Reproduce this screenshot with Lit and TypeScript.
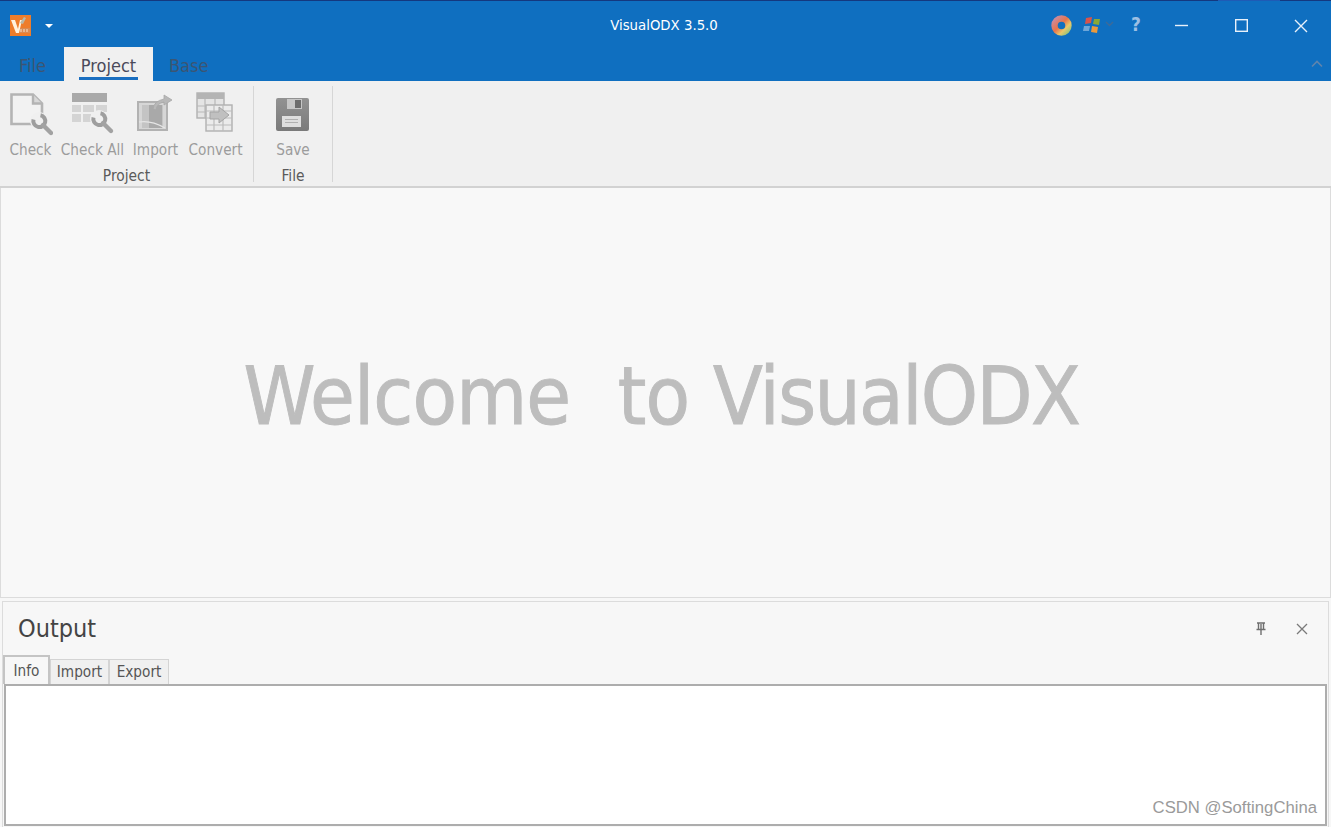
import { LitElement, html, css, svg } from "lit";
import { customElement } from "lit/decorators.js";

const checkIcon = svg`<svg width="44" height="44" viewBox="0 0 44 44">
  <path d="M2.5 2.5H24L33 11.5V32H2.5Z" fill="#f2f2f2" stroke="#b4b4b4" stroke-width="2.6"/>
  <path d="M24 2.5V11.5H33" fill="#d8d8d8" stroke="#b4b4b4" stroke-width="2.4"/>
  <circle cx="30" cy="29" r="9" fill="#f0f0f0"/>
  <path d="M24.5 27.5A6 6 0 1 0 31.5 23.2" fill="none" stroke="#9e9e9e" stroke-width="4"/>
  <path d="M34 33L42 41" stroke="#a2a2a2" stroke-width="4.4" stroke-linecap="round"/>
</svg>`;
const checkAllIcon = svg`<svg width="44" height="44" viewBox="0 0 44 44">
  <rect x="1" y="1" width="35" height="9" fill="#a9a9a9"/>
  <g fill="#d4d4d4">
    <rect x="1" y="13" width="9" height="7"/><rect x="12" y="13" width="11" height="7"/><rect x="25" y="13" width="11" height="7"/>
    <rect x="1" y="22" width="9" height="8"/><rect x="12" y="22" width="8" height="8"/>
  </g>
  <circle cx="28" cy="27" r="9" fill="#f0f0f0"/>
  <path d="M22.5 25.5A6 6 0 1 0 29.5 21.2" fill="none" stroke="#9e9e9e" stroke-width="4"/>
  <path d="M32 31L40 39" stroke="#a2a2a2" stroke-width="4.4" stroke-linecap="round"/>
</svg>`;
const importIcon = svg`<svg width="44" height="44" viewBox="0 0 44 44">
  <rect x="4" y="10" width="29" height="28" fill="#d6d6d6" stroke="#b2b2b2" stroke-width="2"/>
  <rect x="8" y="13" width="21" height="23" fill="#c4c4c4"/>
  <rect x="15" y="13" width="13" height="23" fill="#a9a9a9"/>
  <path d="M5 30Q17 28 31 36" fill="none" stroke="#e6e6e6" stroke-width="1.2"/>
  <path d="M19 17Q20 9 30 7V3L38 8L30 13V10Q23 11 22 18Z" fill="#b8b8b8" stroke="#a8a8a8" stroke-width=".8"/>
</svg>`;
const convertIcon = svg`<svg width="44" height="44" viewBox="0 0 44 44">
  <rect x="3" y="1" width="27" height="25" fill="#e4e4e4" stroke="#b0b0b0" stroke-width="1.4"/>
  <rect x="3" y="1" width="27" height="6" fill="#b4b4b4"/>
  <path d="M3 14H30M3 20H30M11 7V26M21 7V26" stroke="#b8b8b8" stroke-width="1.2"/>
  <rect x="12" y="13" width="26" height="26" fill="#ebebeb" stroke="#b0b0b0" stroke-width="1.4"/>
  <path d="M12 19H38M12 26H38M12 33H38M20 13V39M29 13V39" stroke="#bcbcbc" stroke-width="1.2"/>
  <path d="M16 20H25V15L35 23L25 31V27H16Z" fill="#c0c0c0" stroke="#a4a4a4" stroke-width="1"/>
</svg>`;
const saveIcon = svg`<svg width="33" height="33" viewBox="0 0 33 33">
  <defs><linearGradient id="s" x1="0" y1="0" x2="0" y2="1"><stop offset="0" stop-color="#929292"/><stop offset="1" stop-color="#7a7a7a"/></linearGradient></defs>
  <rect x="0" y="0" width="33" height="33" rx="2" fill="url(#s)"/>
  <rect x="11" y="1" width="15" height="10" fill="#c6c6c6"/>
  <rect x="19" y="2" width="6" height="8" fill="#6c6c6c"/>
  <rect x="6" y="18" width="19" height="11" fill="#dedede"/>
  <path d="M9 21.5H22M9 24.5H22" stroke="#b0b0b0" stroke-width="1"/>
</svg>`;
const logo = svg`<svg width="21" height="21" viewBox="0 0 21 21">
  <rect width="21" height="21" fill="#ee7d2b"/>
  <path d="M1 5H5L8 14L10 5H12L9 18H6Z" fill="#fff3df"/>
  <path d="M10 8L14 2L16 3L13 9Z" fill="#b9b9a8"/>
  <rect x="10" y="13" width="10" height="5" fill="#d98a52"/>
  <path d="M11 14V17M14 14V17M17 14V17" stroke="#f5e2cf" stroke-width="1"/>
</svg>`;
const disc = svg`<svg width="21" height="21" viewBox="0 0 21 21">
  <defs><linearGradient id="d" x1="0" y1="0" x2="1" y2="1">
    <stop offset="0" stop-color="#c98aa0"/><stop offset=".45" stop-color="#e8744a"/><stop offset=".75" stop-color="#e8c86a"/><stop offset="1" stop-color="#9cc47a"/>
  </linearGradient></defs>
  <circle cx="10.5" cy="10.5" r="7" fill="none" stroke="url(#d)" stroke-width="6.4"/>
</svg>`;
const flag = svg`<svg width="20" height="18" viewBox="0 0 20 18">
  <path d="M4 2L10 1L9 7L3 8Z" fill="#d9534a"/>
  <path d="M12 3L18 3L17 9L11 8Z" fill="#8aa834"/>
  <path d="M2 10L8 10L7 15L1 15Z" fill="#6ea6d8"/>
  <path d="M10 10L16 11L15 17L9 16Z" fill="#eb9a3c"/>
</svg>`;
const pin = svg`<svg width="12" height="13" viewBox="0 0 12 13">
  <path d="M2 1H10M3.5 1.5V7M8.5 1.5V7M1.5 7.5H10.5M6 8V13M6 2V7" fill="none" stroke="#6f6f6f" stroke-width="1.4"/>
</svg>`;

@customElement("app-root")
export class AppRoot extends LitElement {
  static styles = css`
    :host {
      display: flex; flex-direction: column; position: relative;
      width: 1331px; height: 827px; overflow: hidden; background: #f7f7f7;
      font-family: "DejaVu Sans Condensed", "DejaVu Sans", sans-serif;
      font-stretch: condensed; color: #555;
    }
    .top-line { height: 1px; flex: none; background: linear-gradient(90deg, #14387f 0 91.5%, #1f5bb5 91.5% 96.2%, #14387f 96.2%); }
    .head { flex: none; height: 80px; background: #0f6fc0; display: flex; flex-direction: column; }
    .title-row { height: 46px; flex: none; display: grid; grid-template-columns: 1fr auto 1fr; align-items: center; }
    .qat { display: flex; align-items: center; padding: 2px 0 0 10px; gap: 14px; }
    .caret { width: 0; height: 0; border: 4px solid transparent; border-top-color: #fff; border-bottom: 0; margin-top: 1px; }
    .title { color: #fff; font-size: 14.8px; padding-right: 3px; padding-top: 1px; }
    .controls { display: flex; align-items: center; justify-content: flex-end; height: 46px; }
    .c-disc { display: flex; margin-right: 10px; margin-top: 3px; }
    .c-flag { display: flex; margin-right: 3px; margin-top: 1px; }
    .c-help { color: #9dbfe3; font-size: 19px; font-weight: bold; width: 30px; text-align: center; margin-left: 7px; }
    .win { width: 60px; height: 46px; display: flex; align-items: center; justify-content: center; padding-top: 3px; box-sizing: border-box; }
    .tabs { flex: 1; display: flex; align-items: flex-end; }
    .tab { height: 34px; font-size: 18px; color: #3b5573; display: flex; align-items: center; padding-top: 2px; box-sizing: border-box; }
    .tab.file { margin-left: 19px; width: 45px; }
    .tab.project { width: 89px; background: #f0f0f0; color: #4a4a5a; justify-content: center; position: relative; }
    .tab.project::after { content: ""; position: absolute; left: 15px; right: 15px; bottom: 1px; height: 3px; background: #1a6ec0; }
    .tab.base { margin-left: 16px; }
    .collapse { margin: 13px 8px 0 auto; align-self: flex-start; display: flex; }
    .ribbon { flex: none; height: 105px; background: #f0f0f0; display: flex; border-bottom: 2px solid #d2d2d2; }
    .group { display: flex; flex-direction: column; align-items: center; border-right: 1px solid #d6d6d6; margin: 5px 0 4px; box-sizing: border-box; }
    .g1 { width: 254px; }
    .g2 { width: 79px; }
    .items { display: flex; flex: 1; padding-top: 4px; }
    .item { display: flex; flex-direction: column; align-items: center; font-size: 15.2px; color: #9c9c9c; }
    .ico { height: 48px; display: flex; align-items: center; justify-content: center; }
    .lbl { white-space: nowrap; margin-top: 3px; }
    .i1 { width: 60px; } .i2 { width: 64px; } .i3 { width: 62px; } .i4 { width: 58px; }
    .g1 .items { width: 244px; margin-right: 9px; margin-left: 1px; }
    .glabel { font-size: 15.4px; color: #5a5a5a; height: 15px; line-height: 18px; }
    .main {
      height: 410px; flex: none; box-sizing: border-box; border: 1px solid #dcdcdc; border-top: 0;
      background: #f8f8f8; display: flex; align-items: center; justify-content: center; padding: 6px 8px 0 0;
    }
    .welcome { font-size: 81px; letter-spacing: -0.9px; word-spacing: 1.6px; color: #bdbdbd; white-space: pre; -webkit-text-stroke: 0.9px #bdbdbd; }
    .tight { letter-spacing: -1.6px; }
    .gap { height: 3px; flex: none; background: #f7f7f7; }
    .output { flex: 1; margin-left: 2px; margin-right: 2px; border: 1px solid #dcdcdc; border-bottom: 0; display: flex; flex-direction: column; background: #f7f7f7; min-height: 0; }
    .o-head { height: 53px; flex: none; display: flex; align-items: center; justify-content: space-between; padding: 0 20px 0 15px; }
    .o-title { font-size: 25px; color: #444; }
    .o-btns { display: flex; align-items: center; gap: 29px; }
    .o-btns svg { display: block; }
    .o-tabs { display: flex; height: 29px; flex: none; align-items: flex-end; padding-left: 0; }
    .o-tab { height: 25px; border: 1px solid #d4d4d4; border-bottom: 0; background: #f0f0f0; font-size: 15.2px; color: #555; display: flex; align-items: center; box-sizing: border-box; justify-content: center; }
    .o-tab.on { height: 29px; width: 47px; background: #f7f7f7; border: 2px solid #c4c4c4; border-bottom: 0; }
    .o-tab.imp { width: 59px; }
    .o-tab.exp { width: 60px; }
    .o-body { flex: 1; background: #fff; border: 2px solid #adadad; margin: 0 1px 1px 1px; }
    .mark { position: absolute; right: 14px; bottom: 9px; font-family: "Liberation Sans", sans-serif; font-stretch: normal; font-size: 16.7px; color: #9a9a9a; }
  `;

  render() {
    return html`
      <div class="top-line"></div>
      <div class="head">
        <div class="title-row">
          <div class="qat">${logo}<span class="caret"></span></div>
          <div class="title">VisualODX 3.5.0</div>
          <div class="controls">
            <span class="c-disc">${disc}</span>
            <span class="c-flag">${flag}</span>
            <svg width="9" height="6" viewBox="0 0 9 6"><path d="M1 1L4.5 4.5L8 1" fill="none" stroke="#3e6a97" stroke-width="1.4"/></svg>
            <span class="c-help">?</span>
            <span class="win"><svg width="13" height="13" viewBox="0 0 13 13"><path d="M0 6.5H13" stroke="#e8f1fa" stroke-width="1.4"/></svg></span>
            <span class="win"><svg width="13" height="13" viewBox="0 0 13 13"><rect x=".7" y=".7" width="11.6" height="11.6" fill="none" stroke="#e8f1fa" stroke-width="1.4"/></svg></span>
            <span class="win"><svg width="14" height="14" viewBox="0 0 14 14"><path d="M1 1L13 13M13 1L1 13" stroke="#e8f1fa" stroke-width="1.4"/></svg></span>
          </div>
        </div>
        <div class="tabs">
          <div class="tab file">File</div>
          <div class="tab project">Project</div>
          <div class="tab base">Base</div>
          <span class="collapse"><svg width="12" height="8" viewBox="0 0 12 8"><path d="M1 6.5L6 1.5L11 6.5" fill="none" stroke="#5f84ad" stroke-width="1.6"/></svg></span>
        </div>
      </div>
      <div class="ribbon">
        <div class="group g1">
          <div class="items">
            <div class="item i1"><div class="ico">${checkIcon}</div><div class="lbl">Check</div></div>
            <div class="item i2"><div class="ico">${checkAllIcon}</div><div class="lbl">Check All</div></div>
            <div class="item i3"><div class="ico">${importIcon}</div><div class="lbl">Import</div></div>
            <div class="item i4"><div class="ico">${convertIcon}</div><div class="lbl">Convert</div></div>
          </div>
          <div class="glabel">Project</div>
        </div>
        <div class="group g2">
          <div class="items">
            <div class="item"><div class="ico">${saveIcon}</div><div class="lbl">Save</div></div>
          </div>
          <div class="glabel">File</div>
        </div>
      </div>
      <div class="main"><div class="welcome">Welcome  to <span class="tight">VisualODX</span></div></div>
      <div class="gap"></div>
      <div class="output">
        <div class="o-head">
          <div class="o-title">Output</div>
          <div class="o-btns">
            ${pin}
            <svg width="12" height="12" viewBox="0 0 12 12"><path d="M1 1L11 11M11 1L1 11" stroke="#7a7a7a" stroke-width="1.3"/></svg>
          </div>
        </div>
        <div class="o-tabs">
          <div class="o-tab on">Info</div>
          <div class="o-tab imp">Import</div>
          <div class="o-tab exp">Export</div>
        </div>
        <div class="o-body"></div>
      </div>
      <div class="mark">CSDN @SoftingChina</div>
    `;
  }
}
